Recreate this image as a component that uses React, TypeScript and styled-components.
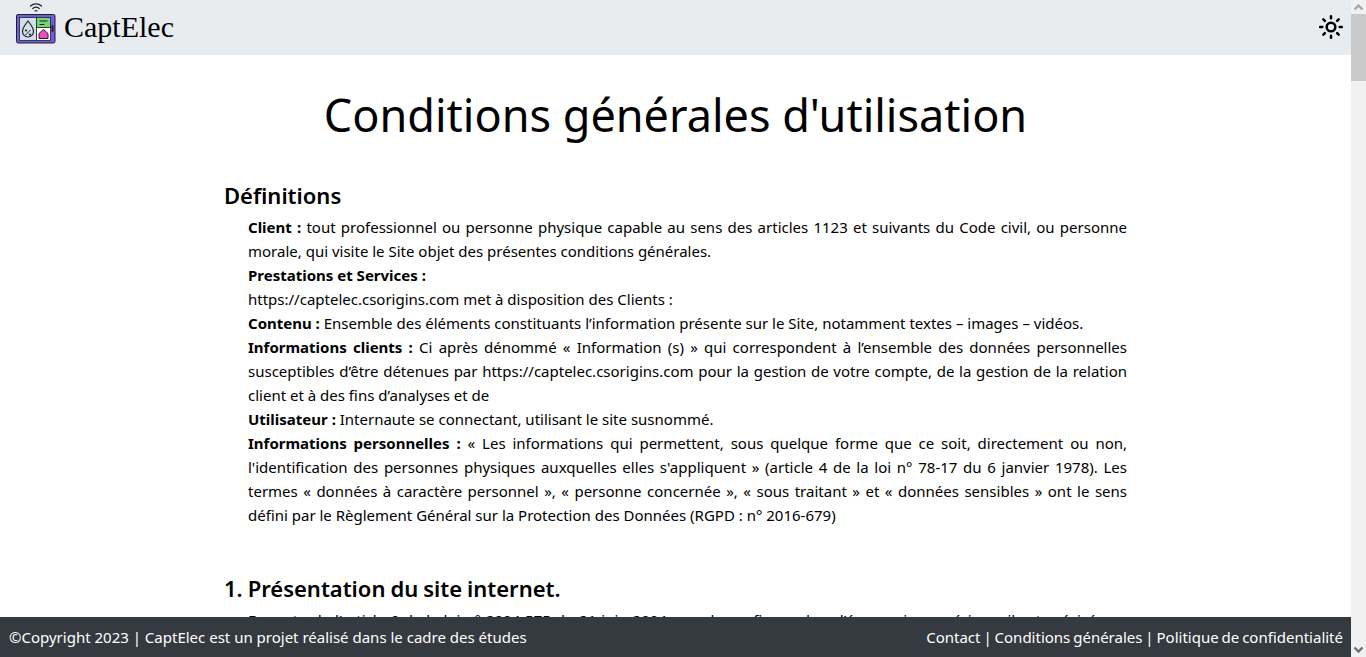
import styled, { createGlobalStyle } from 'styled-components';
import { Sun } from 'lucide-react';

const GlobalStyle = createGlobalStyle`
  html, body {
    margin: 0;
    height: 100%;
    overflow: hidden;
  }
  body {
    font-family: "Noto Sans", "Open Sans", sans-serif;
    font-size: 15px;
    line-height: 24px;
    color: #000;
    background: #fff;
  }
`;

const Logo = () => (
  <svg width="42" height="44" viewBox="0 0 42 44" aria-hidden="true">
    <g fill="none" stroke="#222" strokeWidth="1.2" strokeLinecap="round">
      <path d="M15.500 5a8 8 0 0 1 11 0" />
      <path d="M17.800 7.500a5 5 0 0 1 6.400 0" />
      <path d="M20 9.900a2 2 0 0 1 2 0" />
    </g>
    <rect x="1.500" y="13.500" width="38.500" height="28.500" rx="1.500" fill="#7459e8" stroke="#222" />
    <rect x="4.500" y="16.500" width="17" height="23" fill="#cfe0ea" stroke="#222" strokeWidth="0.8" />
    <path d="M13 20c3 4 5.500 6.500 5.500 10.500a5.500 5.500 0 0 1-11 0c0-4 2.500-6.500 5.500-10.500z" fill="#cfe0ea" stroke="#222" strokeWidth="1.200" />
    <path d="M10.500 34l5-5" stroke="#222" strokeWidth="1" />
    <circle cx="11" cy="29.500" r="1.100" fill="#222" />
    <circle cx="15" cy="33.500" r="1.100" fill="#222" />
    <rect x="21.500" y="16.500" width="14" height="10" fill="#76d672" stroke="#222" strokeWidth="0.8" />
    <path d="M24.500 20h8M24.500 23.500h5" stroke="#222" strokeWidth="1.100" />
    <rect x="21.500" y="26.500" width="14" height="13" fill="#fff" stroke="#222" strokeWidth="0.8" />
    <path d="M28.500 28.500l4.500 4v5h-9v-5z" fill="#ee4fc0" stroke="#222" strokeWidth="1" />
    <rect x="36.500" y="24" width="2" height="7" rx="1" fill="#222" />
  </svg>
);

const Shell = styled.div`
  display: flex;
  height: 100vh;
  overflow: hidden;
`;

const Page = styled.div`
  flex: 1;
  min-width: 0;
  overflow: hidden;
`;

const ScrollTrack = styled.aside`
  flex: none;
  width: 15px;
  display: flex;
  flex-direction: column;
  background: #f1f1f1;
`;

const ScrollArrow = styled.div`
  flex: none;
  height: 14px;
  display: flex;
  align-items: center;
  justify-content: center;
`;

const ScrollThumb = styled.div`
  flex: none;
  height: 67px;
  background: #c9c9c9;
`;

const ScrollRest = styled.div`
  flex: 1;
`;

const Navbar = styled.nav`
  height: 55px;
  box-sizing: border-box;
  background: #e9ecef;
  display: flex;
  align-items: flex-start;
  justify-content: space-between;
  padding: 1px 7px 0 15px;
`;

const Brand = styled.a`
  display: flex;
  align-items: flex-start;
  gap: 7px;
  font-family: "Liberation Serif", serif;
  font-size: 30px;
  line-height: 36px;
  color: #000;
`;

const BrandName = styled.span`
  margin-top: 8px;
`;

const ThemeButton = styled.button`
  display: flex;
  margin-top: 13px;
  padding: 0;
  border: 0;
  background: none;
  color: #000;
`;

const Main = styled.main`
  width: 903px;
  margin: 0 auto;
`;

const Title = styled.h1`
  margin: 28px 0 32px;
  font-size: 45px;
  line-height: 64px;
  font-weight: 400;
  text-align: center;
  white-space: nowrap;
`;

const SectionTitle = styled.h3`
  margin: 0 0 4px;
  font-size: 22px;
  line-height: 32px;
  font-weight: 600;
  word-spacing: -0.75px;
`;

const SectionBody = styled.div`
  margin: 0 0 45px 24px;
  text-align: justify;
`;

const Strong = styled.strong`
  font-weight: 700;
`;

const Footer = styled.footer`
  position: fixed;
  left: 0;
  right: 15px;
  bottom: 0;
  height: 40px;
  box-sizing: border-box;
  padding: 0 8px 0 9px;
  display: flex;
  align-items: center;
  justify-content: space-between;
  background: #343a40;
  color: #fff;
`;

const FooterLinks = styled.span`
  word-spacing: -1px;
`;

const FooterLink = styled.a`
  color: #fff;
`;

export default function App() {
  return (
    <Shell>
      <GlobalStyle />
      <Page>
        <Navbar>
          <Brand>
            <Logo />
            <BrandName>CaptElec</BrandName>
          </Brand>
          <ThemeButton>
            <Sun size={26} strokeWidth={2.300} />
          </ThemeButton>
        </Navbar>
        <Main>
          <Title>Conditions générales d'utilisation</Title>
          <SectionTitle>Définitions</SectionTitle>
          <SectionBody>
            <div><Strong>Client :</Strong> tout professionnel ou personne physique capable au sens des articles 1123 et suivants du Code civil, ou personne morale, qui visite le Site objet des présentes conditions générales.</div>
            <div><Strong>Prestations et Services :</Strong></div>
            <div>https://captelec.csorigins.com met à disposition des Clients :</div>
            <div><Strong>Contenu :</Strong> Ensemble des éléments constituants l’information présente sur le Site, notamment textes – images – vidéos.</div>
            <div><Strong>Informations clients :</Strong> Ci après dénommé « Information (s) » qui correspondent à l’ensemble des données personnelles susceptibles d’être détenues par https://captelec.csorigins.com pour la gestion de votre compte, de la gestion de la relation client et à des fins d’analyses et de</div>
            <div><Strong>Utilisateur :</Strong> Internaute se connectant, utilisant le site susnommé.</div>
            <div><Strong>Informations personnelles :</Strong> « Les informations qui permettent, sous quelque forme que ce soit, directement ou non, l'identification des personnes physiques auxquelles elles s'appliquent » (article 4 de la loi n° 78-17 du 6 janvier 1978). Les termes « données à caractère personnel », « personne concernée », « sous traitant » et « données sensibles » ont le sens défini par le Règlement Général sur la Protection des Données (RGPD : n° 2016-679)</div>
          </SectionBody>
          <SectionTitle>1. Présentation du site internet.</SectionTitle>
          <SectionBody>
            En vertu de l'article 6 de la loi n° 2004-575 du 21 juin 2004 pour la confiance dans l'économie numérique, il est précisé aux utilisateurs du site internet l'identité des différents intervenants dans le cadre de sa réalisation et de son suivi.
          </SectionBody>
        </Main>
        <Footer>
          <span>©Copyright 2023 | CaptElec est un projet réalisé dans le cadre des études</span>
          <FooterLinks>
            <FooterLink>Contact</FooterLink> | <FooterLink>Conditions générales</FooterLink> | <FooterLink>Politique de confidentialité</FooterLink>
          </FooterLinks>
        </Footer>
      </Page>
      <ScrollTrack>
        <ScrollArrow>
          <svg width="11" height="8" viewBox="0 0 11 8" aria-hidden="true">
            <path d="M1.500 6.500l4-4 4 4" fill="none" stroke="#a8a8a8" strokeWidth="2.400" />
          </svg>
        </ScrollArrow>
        <ScrollThumb />
        <ScrollRest />
        <ScrollArrow>
          <svg width="11" height="8" viewBox="0 0 11 8" aria-hidden="true">
            <path d="M1.500 1.500l4 4 4-4" fill="none" stroke="#6e6e6e" strokeWidth="2.400" />
          </svg>
        </ScrollArrow>
      </ScrollTrack>
    </Shell>
  );
}
